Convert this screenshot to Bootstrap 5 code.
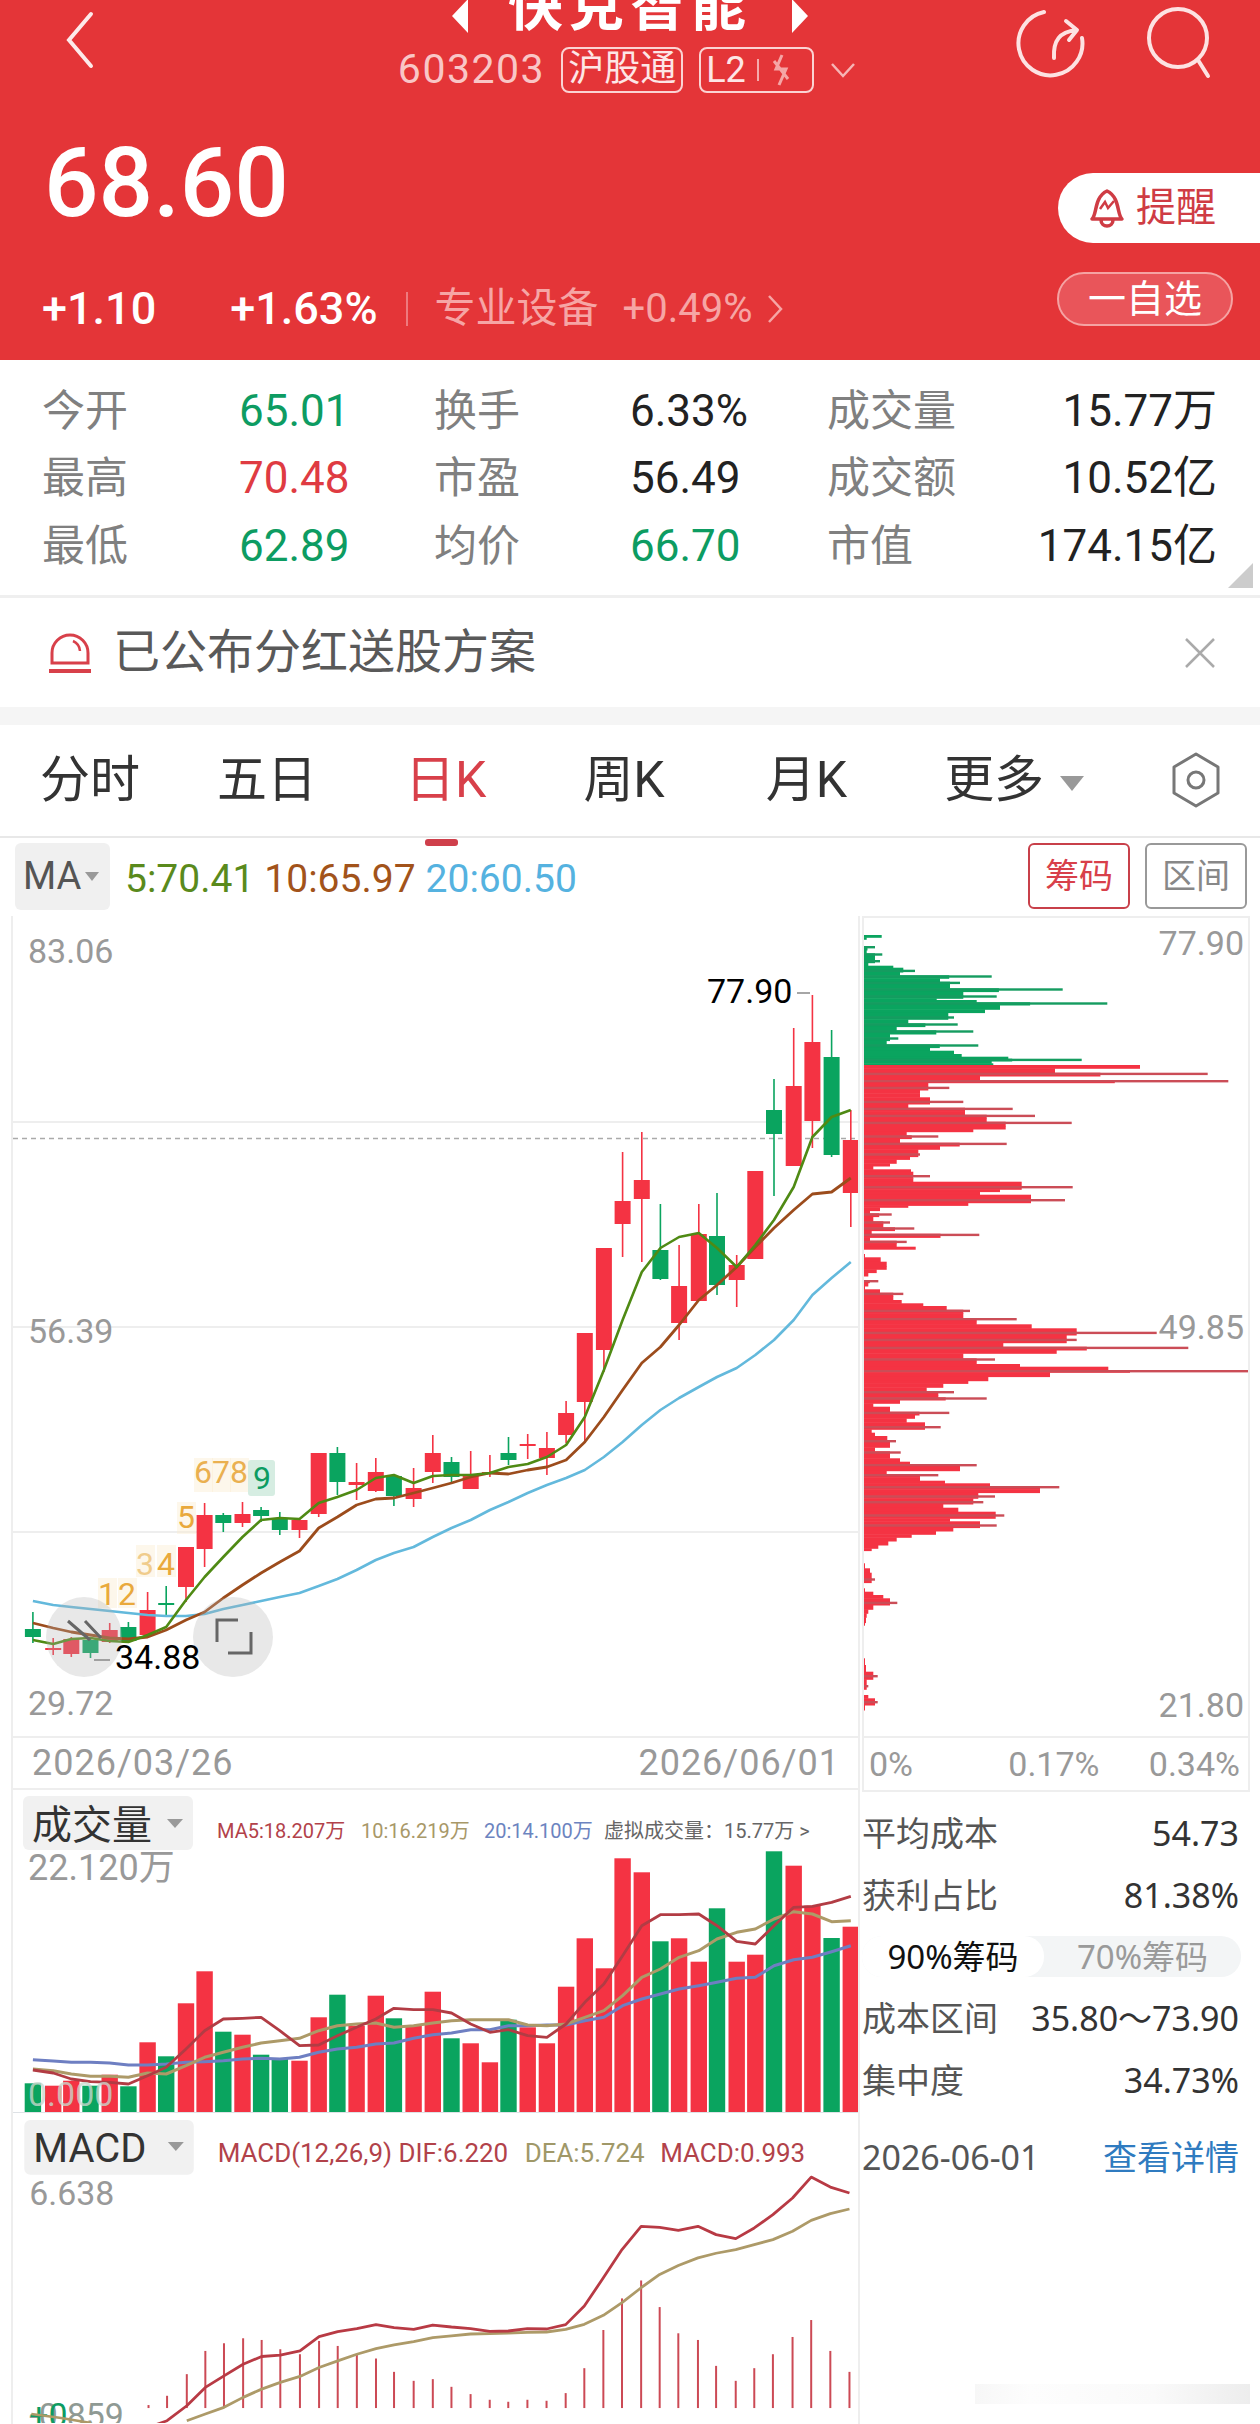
<!DOCTYPE html>
<html lang="zh-CN">
<head>
<meta charset="UTF-8" />
<meta name="viewport" content="width=device-width, initial-scale=1.0"/>
<title>快克智能 603203</title>
<link href="https://cdn.jsdelivr.net/npm/bootstrap@5.3.3/dist/css/bootstrap.min.css" rel="stylesheet">
<style>
  html, body { height: 2424px; overflow: hidden; background: #fff; }
  body { font-family: Roboto, "Noto Sans CJK SC", sans-serif; color: #222; }
  svg { display: block; }
  svg text { font-family: Roboto, "Noto Sans CJK SC", sans-serif; }

  .quote-head { height: 360px; background: #e43538; color: #fff; overflow: hidden; }
  .head-top { height: 135px; }
  .head-side { width: 210px; }
  .back-btn { margin-left: 5px; }
  .stock-title { margin-top: -22px; height: 56px; line-height: 56px; font-size: 55px; font-weight: 700; letter-spacing: 6px; gap: 38px; }
  .title-arrow { margin-top: 20px; }
  .sub-line { margin-top: 13px; height: 46px; gap: 16px; color: #f9c6c6; font-size: 41px; transform: translateX(-3px); }
  .code-text { letter-spacing: 1.5px; }
  .tag-box { height: 46px; border: 2px solid #fbd3d3; border-radius: 8px; font-size: 36px; line-height: 40px; color: #fde6e6; padding: 0 5px; }
  .tag-wide { width: 115px; }
  .price-line { height: 108px; }
  .big-price { font-size: 96px; line-height: 96px; font-weight: 500; padding-left: 44px; }
  .alert-pill { width: 202px; height: 70px; margin-top: 38px; background: #fff; border-radius: 35px 0 0 35px; color: #cf3c44; font-size: 40px; gap: 10px; padding-left: 30px; }
  .change-line { height: 54px; margin-top: 29px; padding-right: 27px; }
  .change-left { margin-top: 20px; }
  .change-text { font-size: 45px; font-weight: 500; }
  .change-main { padding-left: 42px; gap: 74px; }
  .sector-group { color: #f6a5a5; font-size: 41px; gap: 24px; padding-left: 27px; margin-left: 28px; border-left: 2px solid #ee7a7e; height: 34px; }
  .sector-pct { font-size: 40px; }
  .sector-more { margin-left: -10px; }
  .watch-pill { width: 176px; height: 54px; border: 2px solid #f5a3a3; border-radius: 27px; background: #e9555a; font-size: 38px; }

  .stat-box { height: 238px; padding: 17px 43px 0 42px; border-bottom: 3px solid #efefef; position: relative; }
  .stat-grid { display: grid; grid-template-columns: 197px 195px 196px 197px 130px 260px; grid-auto-rows: 67.5px; align-items: center; }
  .stat-label { font-size: 43px; color: #808080; }
  .stat-val { font-size: 44px; }
  .stat-corner { position: absolute; right: 7px; bottom: 7px; width: 0; height: 0; border-left: 25px solid transparent; border-bottom: 25px solid #ccc; }
  .up-red { color: #df3b42; }
  .down-green { color: #0d9c62; }

  .notice-bar { height: 109px; padding: 0 45px 0 48px; font-size: 47px; color: #595959; }
  .notice-text { gap: 21px; }
  .grey-band { height: 18px; background: #f5f5f5; }

  .tab-bar { height: 113px; padding-left: 40px; border-bottom: 2px solid #e8e8e8; font-size: 50px; color: #333; gap: 91px; position: relative; }
  .tab-first { margin-right: -14px; }
  .tab-month { margin-left: 10px; margin-right: 6px; }
  .tab-on { color: #d8404a; position: relative; margin-left: -3px; margin-right: 6px; }
  .tab-on::after { content: ""; position: absolute; left: 20px; bottom: -28px; width: 33px; height: 7px; border-radius: 3px; background: #cf3f4b; }
  .tab-tri { display: inline-block; width: 0; height: 0; margin-left: 16px; vertical-align: middle; border-left: 12px solid transparent; border-right: 12px solid transparent; border-top: 15px solid #999; }
  .tab-hex { position: absolute; right: 39px; top: 27px; }

  .ma-bar { height: 78px; padding: 5px 13px 0 15px; }
  .ma-pick { width: 95px; height: 67px; background: #f0f0f0; border-radius: 6px; font-size: 38px; color: #555; gap: 4px; padding-left: 8px; }
  .small-tri { width: 0; height: 0; border-left: 7px solid transparent; border-right: 7px solid transparent; border-top: 9px solid #999; }
  .ma-vals { font-size: 39px; gap: 10px; padding-left: 15px; }
  .ma-five { color: #5a8a1c; }
  .ma-ten { color: #a2531a; }
  .ma-twenty { color: #55b2e0; }
  .mode-btn { width: 102px; height: 66px; border: 2px solid #999; border-radius: 6px; font-size: 34px; color: #888; background: #fff; }
  .mode-on { border-color: #c8404a; color: #d8404a; }
  .mode-gap { gap: 15px; }

  .chart-zone { padding-left: 11px; position: relative; }
  .chart-left { width: 849px; border-left: 2px solid #eee; border-right: 2px solid #eee; height: 1508px; }
  .chart-right { width: 388px; margin-left: 2px; }
  .chip-box { border: 2px solid #eee; border-top-width: 2px; }
  .date-row { height: 54px; padding: 0 18px 0 19px; font-size: 36px; color: #999; border-top: 2px solid #eee; border-bottom: 2px solid #eee; letter-spacing: 1px; }
  .pct-row { height: 54px; padding: 0 8px 0 5px; font-size: 34px; color: #999; border-top: 2px solid #eee; }
  .pct-mid { margin-left: 46px; }
  .info-panel { padding-top: 10px; font-family: "Noto Sans", "Noto Sans CJK SC", sans-serif; font-size: 34px; color: #555; }
  .info-row { height: 62px; padding-right: 11px; }
  .info-val { color: #333; font-size: 34px; }
  .ratio-switch { height: 41px; margin: 10px 9px 10px 0; background: #f3f5f6; border-radius: 20px; color: #9a9a9a; font-size: 33px; }
  .ratio-on { width: 182px; height: 41px; background: #fff; border-radius: 20px; color: #111; }
  .ratio-off { flex: 1; }
  .detail-link { color: #2f7bc0; text-decoration: none; }
  .date-info { margin-top: 15px; }
  .page-mark { position: absolute; left: 975px; bottom: 20px; width: 275px; height: 20px; background: linear-gradient(to left, #ededed, #fafafa 35%, #fdfdfd 80%, #f7f7f7); }
</style>
</head>
<body>
  <header class="quote-head">
    <div class="head-top d-flex">
      <div class="head-side ps-5 pt-2">
        <svg class="back-btn" width="60" height="70" viewBox="0 0 60 70"><path d="M20 6 L-2 32 L20 58" transform="translate(18 0)" fill="none" stroke="#fdeaea" stroke-width="4" stroke-linecap="round"/></svg>
      </div>
      <div class="flex-fill text-center">
        <div class="stock-title d-flex justify-content-center align-items-center">
          <svg class="title-arrow" width="20" height="34" viewBox="0 0 20 34"><path d="M18 0 V34 L2 17 Z" fill="#fff"/></svg>
          <span>快克智能</span>
          <svg class="title-arrow" width="20" height="34" viewBox="0 0 20 34"><path d="M2 0 V34 L18 17 Z" fill="#fff"/></svg>
        </div>
        <div class="sub-line d-flex justify-content-center align-items-center">
          <span class="code-text">603203</span>
          <span class="tag-box">沪股通</span>
          <span class="tag-box tag-wide d-flex align-items-center gap-2">L2
            <svg width="42" height="34" viewBox="0 0 42 34"><path d="M4 6 V28" stroke="#fbd3d3" stroke-width="1.5"/><path d="M28 2 L22 16 H32 L25 32 M20 8 L34 26" fill="none" stroke="#f5a5a5" stroke-width="3"/></svg>
          </span>
          <svg width="26" height="16" viewBox="0 0 26 16"><path d="M2 2 L13 14 L24 2" fill="none" stroke="#f6b5b5" stroke-width="2.5"/></svg>
        </div>
      </div>
      <div class="head-side d-flex justify-content-end align-items-start">
        <svg class="mt-1 flex-shrink-0" width="210" height="80" viewBox="0 0 210 80" overflow="visible">
          <path d="M-6 8 A32 32 0 1 0 32 34" fill="none" stroke="#fde2e2" stroke-width="4" stroke-linecap="round"/>
          <path d="M4 54 C3 36 10 28 26 26 M16 17 L27 26 L19 36" fill="none" stroke="#fde2e2" stroke-width="4" stroke-linecap="round" stroke-linejoin="round"/>
          <circle cx="128" cy="34" r="29" fill="none" stroke="#fde2e2" stroke-width="4"/>
          <path d="M148 56 L158 72" stroke="#fde2e2" stroke-width="4" stroke-linecap="round"/>
        </svg>
      </div>
    </div>
    <div class="price-line d-flex justify-content-between">
      <div class="big-price">68.60</div>
      <div class="alert-pill d-flex align-items-center">
        <svg width="38" height="42" viewBox="0 0 38 42"><path d="M4 32 C9 28 6 10 19 4 C32 10 29 28 34 32 Z M13 33 C13 41 25 41 25 33" fill="none" stroke="#cf3c44" stroke-width="3.5" stroke-linejoin="round"/><path d="M12 22 L17 15 L20 21 L26 14" fill="none" stroke="#cf3c44" stroke-width="2.5"/></svg>
        <span>提醒</span>
      </div>
    </div>
    <div class="change-line d-flex justify-content-between align-items-center">
      <div class="change-left d-flex align-items-center">
        <div class="change-main change-text d-flex"><span>+1.10</span><span>+1.63%</span></div>
        <div class="sector-group d-flex align-items-center">
          <span>专业设备</span>
          <span class="sector-pct">+0.49%</span>
          <svg class="sector-more" width="16" height="32" viewBox="0 0 16 32"><path d="M2 3 L14 16 L2 29" fill="none" stroke="#f6a5a5" stroke-width="2.5"/></svg>
        </div>
      </div>
      <div class="watch-pill d-flex align-items-center justify-content-center">一自选</div>
    </div>
  </header>

  <section class="stat-box">
    <div class="stat-grid">
      <span class="stat-label">今开</span><span class="stat-val down-green">65.01</span>
      <span class="stat-label">换手</span><span class="stat-val">6.33%</span>
      <span class="stat-label">成交量</span><span class="stat-val text-end">15.77万</span>
      <span class="stat-label">最高</span><span class="stat-val up-red">70.48</span>
      <span class="stat-label">市盈</span><span class="stat-val">56.49</span>
      <span class="stat-label">成交额</span><span class="stat-val text-end">10.52亿</span>
      <span class="stat-label">最低</span><span class="stat-val down-green">62.89</span>
      <span class="stat-label">均价</span><span class="stat-val down-green">66.70</span>
      <span class="stat-label">市值</span><span class="stat-val text-end">174.15亿</span>
    </div>
    <span class="stat-corner"></span>
  </section>

  <section class="notice-bar d-flex align-items-center justify-content-between">
    <div class="notice-text d-flex align-items-center">
      <svg width="44" height="44" viewBox="0 0 44 44"><path d="M4 32 V22 A18 18 0 0 1 40 22 V32 Z" fill="none" stroke="#d8404a" stroke-width="3"/><path d="M1 40 H43" stroke="#d8404a" stroke-width="4"/><path d="M25 10 A12 12 0 0 1 32 20" fill="none" stroke="#d8404a" stroke-width="2.5"/></svg>
      <span>已公布分红送股方案</span>
    </div>
    <svg width="30" height="30" viewBox="0 0 30 30"><path d="M1 1 L29 29 M29 1 L1 29" stroke="#aaa" stroke-width="2.5"/></svg>
  </section>
  <div class="grey-band"></div>

  <nav class="tab-bar d-flex align-items-center">
    <span class="tab-first">分时</span>
    <span>五日</span>
    <span class="tab-on">日K</span>
    <span>周K</span>
    <span class="tab-month">月K</span>
    <span>更多<i class="tab-tri"></i></span>
    <svg class="tab-hex" width="50" height="56" viewBox="0 0 50 56"><path d="M25 2 L47 15 V41 L25 54 L3 41 V15 Z" fill="none" stroke="#777" stroke-width="3" stroke-linejoin="round"/><circle cx="25" cy="28" r="8" fill="none" stroke="#777" stroke-width="3"/></svg>
  </nav>

  <div class="ma-bar d-flex justify-content-between">
    <div class="d-flex">
      <div class="ma-pick d-flex align-items-center"><span>MA</span><i class="small-tri"></i></div>
      <div class="ma-vals d-flex align-items-center">
        <span class="ma-five">5:70.41</span><span class="ma-ten">10:65.97</span><span class="ma-twenty">20:60.50</span>
      </div>
    </div>
    <div class="d-flex mode-gap">
      <div class="mode-btn mode-on d-flex align-items-center justify-content-center">筹码</div>
      <div class="mode-btn d-flex align-items-center justify-content-center">区间</div>
    </div>
  </div>

  <main class="chart-zone d-flex">
    <div class="chart-left">
      <svg id="klineChart" width="845" height="820" viewBox="13 916 845 820"></svg>
      <div class="date-row d-flex justify-content-between align-items-center"><span>2026/03/26</span><span>2026/06/01</span></div>
      <svg id="volChart" width="845" height="322" viewBox="13 1791 845 322"></svg>
      <svg id="macdChart" class="border-top" width="845" height="311" viewBox="13 2113 845 311"></svg>
    </div>
    <div class="chart-right">
      <div class="chip-box">
        <svg id="chipChart" width="384" height="818" viewBox="864 918 384 818"></svg>
        <div class="pct-row d-flex justify-content-between align-items-center"><span>0%</span><span class="pct-mid">0.17%</span><span>0.34%</span></div>
      </div>
      <div class="info-panel">
        <div class="info-row d-flex justify-content-between align-items-center"><span>平均成本</span><span class="info-val">54.73</span></div>
        <div class="info-row d-flex justify-content-between align-items-center"><span>获利占比</span><span class="info-val">81.38%</span></div>
        <div class="ratio-switch d-flex align-items-center">
          <div class="ratio-on d-flex align-items-center justify-content-center">90%筹码</div>
          <div class="ratio-off text-center">70%筹码</div>
        </div>
        <div class="info-row d-flex justify-content-between align-items-center"><span>成本区间</span><span class="info-val">35.80～73.90</span></div>
        <div class="info-row d-flex justify-content-between align-items-center"><span>集中度</span><span class="info-val">34.73%</span></div>
        <div class="info-row date-info d-flex justify-content-between align-items-center"><span>2026-06-01</span><a class="detail-link" href="#">查看详情</a></div>
      </div>
    </div>
    <div class="page-mark"></div>
  </main>

  <script src="https://cdn.jsdelivr.net/npm/bootstrap@5.3.3/dist/js/bootstrap.bundle.min.js"></script>
  <script>
    const RED = '#f43343', GREEN = '#0aa45f';
    const xs = [60,97,130,165,200,234,269,303,339,373,407,442,476,510,546,581,615,650,685,718,754,789,823,858,893,927,962,997,1032,1066,1101,1135,1170,1204,1238,1274,1307,1343,1377,1411,1447,1481,1516,1551].map(z => z / 1.823);
    const isGreen = [0,3,5,7,10,12,13,16,19,22,25,33,36,39,42];
    const colorOf = i => isGreen.includes(i) ? GREEN : RED;

    function rect(x, y, w, h, fill) { return `<rect x="${x}" y="${y}" width="${w}" height="${h}" fill="${fill}"/>`; }
    function line(ys, color, width, from = 0) {
      const pts = ys.map((y, i) => `${xs[i + from].toFixed(1)},${y}`).join(' ');
      return `<polyline points="${pts}" fill="none" stroke="${color}" stroke-width="${width}" stroke-linejoin="round"/>`;
    }
    function label(x, y, text, size, color, extra = '') {
      return `<text x="${x}" y="${y}" font-size="${size}" fill="${color}" ${extra}>${text}</text>`;
    }

    // kline: body top, body bottom, wick top, wick bottom
    const candles = [
      [1629,1637,1612,1643],[1648,1650,1638,1655],[1639,1654,1637,1657],[1640,1653,1637,1658],
      [1630,1642,1623,1643],[1627,1641,1622,1642],[1610,1635,1592,1638],[1603,1605,1586,1617],
      [1547,1587,1547,1602],[1515,1549,1503,1567],[1515,1523,1513,1532],[1514,1523,1502,1527],
      [1510,1516,1507,1522],[1518,1530,1512,1535],[1520,1530,1519,1538],[1453,1514,1453,1517],
      [1453,1482,1447,1495],[1482,1485,1463,1500],[1472,1491,1458,1492],[1476,1496,1474,1506],
      [1488,1499,1468,1507],[1453,1472,1435,1483],[1462,1477,1457,1482],[1474,1489,1451,1489],
      [1472,1474,1455,1477],[1453,1460,1437,1465],[1444,1446,1434,1459],[1448,1458,1432,1475],
      [1413,1435,1401,1443],[1333,1402,1333,1443],[1248,1350,1248,1372],[1201,1224,1152,1257],
      [1180,1199,1132,1262],[1250,1279,1204,1280],[1286,1323,1245,1340],[1234,1301,1204,1301],
      [1236,1285,1193,1295],[1265,1280,1255,1307],[1171,1259,1171,1259],[1110,1134,1079,1196],
      [1086,1166,1028,1166],[1042,1121,995,1148],[1057,1155,1030,1157],[1140,1193,1110,1227]
    ];
    const ma5 = [1640,1644,1639,1638,1641,1642,1635,1627,1600,1577,1557,1537,1520,1518,1519,1503,1497,1490,1478,1475,1483,1476,1475,1475,1473,1467,1464,1457,1445,1417,1370,1320,1272,1248,1237,1233,1248,1267,1245,1220,1187,1137,1117,1110];
    const ma10 = [1623,1628,1632,1635,1638,1639,1637,1630,1620,1612,1598,1585,1573,1562,1551,1528,1517,1505,1499,1498,1493,1488,1483,1477,1473,1474,1470,1467,1460,1442,1417,1390,1363,1347,1325,1300,1285,1267,1247,1228,1210,1194,1192,1178];
    const ma20 = [1601,1605,1607,1609,1611,1613,1615,1616,1616,1614,1609,1605,1601,1597,1593,1586,1579,1570,1560,1553,1547,1537,1528,1520,1510,1502,1493,1485,1478,1470,1457,1442,1425,1410,1398,1387,1377,1368,1355,1340,1320,1295,1278,1262];

    let k = '';
    [1121, 1326, 1531].forEach(y => { k += rect(13, y, 845, 2, '#eeeeee'); });
    k += `<path d="M13 1138.5 H858" stroke="#aaa" stroke-width="1.5" stroke-dasharray="5 4"/>`;
    k += label(28, 963, '83.06', 34, '#999') + label(28, 1343, '56.39', 34, '#999') + label(28, 1715, '29.72', 34, '#999');
    candles.forEach((c, i) => {
      const x = xs[i], col = colorOf(i);
      k += rect((x - .8).toFixed(1), c[2], 1.6, c[3] - c[2], col);
      k += rect((x - 8).toFixed(1), c[0], 16, c[1] - c[0], col);
    });
    k += line(ma20, '#63b9dc', 2.6) + line(ma10, '#9c4c1c', 2.8) + line(ma5, '#4f8a14', 2.6);
    // 九转序列
    [[107,'1'],[127,'2']].forEach(n => { k += rect(n[0] - 9, 1578, 19, 30, 'rgba(250,235,205,.4)') + label(n[0], 1605, n[1], 32, '#e9a93c', 'text-anchor="middle"'); });
    [[145,'3'],[166,'4']].forEach(n => { k += rect(n[0] - 9, 1545, 19, 32, 'rgba(250,235,205,.4)') + label(n[0], 1575, n[1], 32, n[1] === '3' ? '#f0cc8c' : '#e9a93c', 'text-anchor="middle"'); });
    k += rect(177, 1502, 19, 32, 'rgba(250,235,205,.4)') + label(186, 1528, '5', 32, '#e9a93c', 'text-anchor="middle"');
    [[203,'6'],[221,'7'],[239,'8']].forEach(n => { k += rect(n[0] - 9, 1458, 19, 34, 'rgba(250,235,205,.4)') + label(n[0], 1483, n[1], 32, '#eab050', 'text-anchor="middle"'); });
    k += `<rect x="248" y="1460" width="27" height="36" rx="3" fill="#d6ede2"/>` + label(262, 1489, '9', 32, '#0d9c62', 'text-anchor="middle"');
    // 高低点
    k += label(707, 1003, '77.90', 34, '#000') + `<path d="M797 993 H810" stroke="#888" stroke-width="1.5"/>`;
    k += `<ellipse cx="84" cy="1637" rx="38" ry="40" fill="rgba(180,180,180,.3)"/><ellipse cx="233" cy="1637" rx="40" ry="40" fill="rgba(180,180,180,.3)"/>`;
    k += `<path d="M68 1621 L90 1640 M85 1621 L101 1638" stroke="#666" stroke-width="3"/>`;
    k += `<path d="M217 1642 V1620 H238 M228 1653 H251 V1632" fill="none" stroke="#666" stroke-width="3"/>`;
    k += label(115, 1669, '34.88', 34, '#000') + `<path d="M94 1660 H110" stroke="#888" stroke-width="1.5"/>`;
    document.getElementById('klineChart').innerHTML = k;

    // volume
    const volTop = [943,950,935,950,917,952,820,862,703,607,788,797,857,870,875,745,677,770,680,748,770,668,808,823,880,752,775,823,653,508,598,268,310,517,508,578,418,578,557,247,290,410,507,473];
    const volA = [903,912,930,938,940,945,920,895,840,785,750,748,745,785,830,828,800,775,750,718,722,722,732,765,790,782,800,805,765,700,645,560,470,437,437,435,470,517,525,470,415,412,400,382];
    const volB = [900,905,915,922,922,925,912,915,890,865,850,835,822,815,808,785,770,765,762,775,770,762,755,752,752,752,768,770,765,745,725,680,625,600,565,545,510,490,480,450,428,435,458,455];
    const volC = [872,876,880,880,882,888,888,885,880,878,875,870,868,870,865,850,840,835,825,822,808,797,792,782,782,770,770,768,768,755,745,710,690,675,660,650,640,628,625,590,572,565,548,530];
    const toVol = z => +(1770 + z / 3).toFixed(1);
    let v = '';
    volTop.forEach((z, i) => { v += rect((xs[i] - 8.2).toFixed(1), toVol(z), 16.4, 2113 - toVol(z), colorOf(i)); });
    v += line(volC.map(toVol), '#6e7fc2', 3) + line(volB.map(toVol), '#ad9a68', 3) + line(volA.map(toVol), '#b23c44', 2.8);
    v += `<rect x="23" y="1797" width="170" height="54" rx="6" fill="#f1f1f1"/>` + label(32, 1840, '成交量', 40, '#333');
    v += `<path d="M167 1820 H183 L175 1829 Z" fill="#999"/>`;
    v += label(217, 1839, 'MA5:18.207万', 20, '#b2424a') + label(361, 1839, '10:16.219万', 20, '#a89868') + label(484, 1839, '20:14.100万', 20, '#6c84c0') + label(604, 1839, '虚拟成交量：15.77万 &gt;', 20, '#666');
    v += label(28, 1881, '22.120万', 36, '#999');
    v += label(28, 2107, '0.000', 34, 'rgba(200,215,205,.8)');
    document.getElementById('volChart').innerHTML = v;

    // macd
    const dif = [985,965,920,865,830,795,772,768,755,712,697,688,676,685,690,677,683,688,696,695,688,689,676,620,535,450,380,383,392,380,405,417,385,345,295,232,262,280];
    const dea = [965,945,925,895,870,850,832,805,785,765,748,737,727,715,710,704,703,701,699,698,690,675,648,610,565,525,498,475,461,450,435,420,395,362,342,328];
    const bars = [918,890,825,755,732,717,722,750,765,725,740,765,778,818,845,840,863,885,902,908,902,905,882,807,692,597,543,623,702,722,800,845,807,765,713,662,755,818];
    const toMacd = z => +(2100 + z / 3).toFixed(1);
    let m = '';
    bars.forEach((z, i) => { m += rect((xs[i + 6] - 1).toFixed(1), toMacd(z), 2, 2409 - toMacd(z), '#cc4a55'); });
    m += line(dea.map(toMacd), '#ad9a68', 2.8, 8) + line(dif.map(toMacd), '#b83a44', 2.8, 6);
    m += `<rect x="23" y="2120" width="170" height="55" rx="6" fill="#f1f1f1"/>` + label(32, 2162, 'MACD', 40, '#333');
    m += `<path d="M167 2142 H183 L175 2151 Z" fill="#999"/>`;
    m += label(217, 2162, 'MACD(12,26,9) DIF:6.220', 26, '#b2424a') + label(525, 2162, 'DEA:5.724', 26, '#a09868') + label(661, 2162, 'MACD:0.993', 26, '#b2424a');
    m += label(28, 2205, '6.638', 34, '#999');
    m += label(28, 2428, '-0.859', 34, '#8f9a94') + label(28, 2428, '+0', 34, '#0d9c62');
    m += `<path d="M30 2415 L60 2419 L90 2424" fill="none" stroke="#ad9a68" stroke-width="2.6"/>`;
    document.getElementById('macdChart').innerHTML = m;

    // chips: [zoom y, zoom x end, starts a new block]; solid body follows the local median, the rest is a thin spike
    const chipGreen = [[105,95],[112,50],[118,40],[126,38],[138,75],[150,50],[160,97],[170,75],[180,90],[188,55],[197,130],[203,160],[209,195],[216,150],[226,425],[235,270],[245,330],[255,300],[265,638],[275,340],[286,440],[295,260],[300,380],[307,772],[315,450],[328,405],[338,295],[349,312],[358,175],[370,323],[380,140],[391,370],[402,120],[412,145],[422,110],[433,385],[443,240],[452,312],[462,335],[470,475],[476,695],[483,425],[490,430]];
    const chipRed = [[495,870],[505,615],[518,1073],[528,390],[540,1135],[548,235],[560,298],[570,210],[580,210],[592,240],[602,340],[612,175],[623,488],[634,345],[644,555],[654,410],[665,665],[678,467],[687,370],[695,170],[706,265],[716,150],[728,470],[738,270],[748,205],[760,210],[770,180],[778,140],[790,120],[798,70],[808,183],[815,190],[825,240],[835,190],[845,515],[858,668],[868,450],[875,390],[884,543],[897,645],[908,355],[916,175],[922,90],[932,60],[940,125],[950,70],[964,120],[972,100],[982,193],[992,65],[1001,388],[1012,60],[1022,170],[1030,140],[1040,197],
      [1062,45,1],[1072,92],[1085,110],[1098,110],[1108,80],[1118,55],[1128,42],[1140,85],[1148,55],[1158,45],[1168,90],[1178,160],[1188,130],[1200,155],[1210,220],[1218,290],[1229,360],[1240,340],[1254,500],[1262,380],[1273,545],[1285,680],[1295,920],[1305,650],[1316,680],[1328,460],
      [1340,1015],[1350,620],[1360,340],[1375,435],[1385,380],[1392,510],[1400,775],[1410,1200],[1417,600],[1430,415],[1442,355],[1450,280],[1462,230],[1473,312],[1485,265],[1492,410],[1500,150],[1510,70],[1520,120],[1535,298],[1545,195],[1555,170],[1567,225],[1578,272],[1588,65],[1598,75],[1608,112],[1620,138],[1632,120],[1642,75],[1654,152],[1665,120],[1675,150],[1685,180],[1692,380],[1700,330],[1712,110],[1722,265],[1732,210],[1742,285],[1750,420],[1758,628],[1768,570],[1778,385],[1786,435],[1795,370],[1803,400],[1812,280],[1823,325],[1835,437],[1843,463],[1855,300],[1864,390],[1873,440],[1883,310],[1893,258],[1903,185],[1912,140],[1923,115],[1935,85],[1945,65],[1952,40],
      [1978,42,1],[1990,45],[2005,60],[2018,65],[2035,75],[2048,42],[2065,45],[2075,70],[2085,100],[2095,120],[2105,142],[2115,70],[2128,55],[2140,50],[2152,48],[2168,45],
      [2260,38,1],[2275,45],[2295,48],[2315,70],[2325,83],[2338,50],[2355,55],[2368,40],[2385,55],[2395,75],[2403,83],[2415,45],[2430,40],[2445,38]];
    function chipBars(rows, base, color, thinColor) {
      let s = '';
      rows.forEach((r, i) => {
        const prev = rows[i - 1], next = rows[i + 1];
        const joined = next && !next[2];
        const h = joined ? (next[0] - r[0]) / 3 + .5 : 3;
        const y = base + r[0] / 3;
        const near = [r[1], !r[2] && prev ? prev[1] : r[1], joined ? next[1] : r[1]].sort((a, b) => a - b);
        const body = Math.min(r[1], Math.max(near[1], r[1] * .7));
        s += rect(862, y.toFixed(1), ((body - 36) / 3).toFixed(1), h.toFixed(1), color);
        if (r[1] > body) s += rect(862, y.toFixed(1), ((r[1] - 36) / 3).toFixed(1), 2.4, thinColor);
      });
      return s;
    }
    let c = chipBars(chipGreen, 900, GREEN, '#159c60') + chipBars(chipRed, 900, RED, '#cb4d57');
    c += label(1244, 955, '77.90', 34, '#999', 'text-anchor="end"') + label(1244, 1339, '49.85', 34, '#999', 'text-anchor="end"') + label(1244, 1717, '21.80', 34, '#999', 'text-anchor="end"');
    document.getElementById('chipChart').innerHTML = c;
  </script>
</body>
</html>
